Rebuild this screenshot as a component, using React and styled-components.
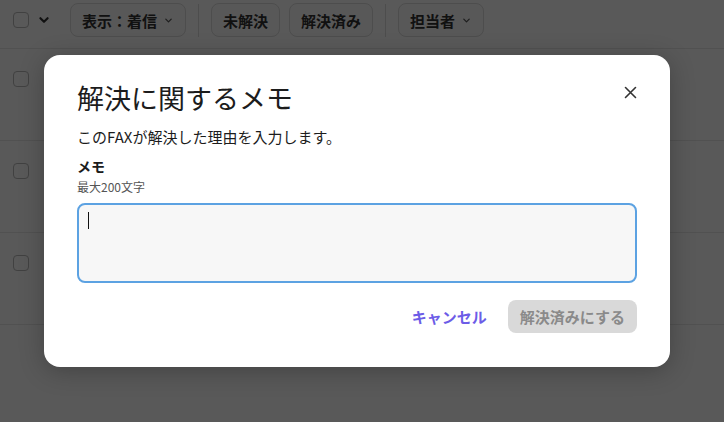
import React from "react";
import styled, { createGlobalStyle } from "styled-components";

const GlobalStyle = createGlobalStyle`
  html, body {
    margin: 0;
    padding: 0;
    background: #ffffff;
    font-family: "Noto Sans CJK JP", "Noto Sans", sans-serif;
  }
  * { box-sizing: border-box; }
`;

const Page = styled.div`
  position: relative;
  width: 724px;
  height: 422px;
  overflow: hidden;
  background: #ffffff;
`;

const Toolbar = styled.div`
  display: flex;
  align-items: center;
  height: 49px;
  padding: 0 0 8px 13px;
  border-bottom: 1px solid #e8e8e8;
`;

const CheckBox = styled.span`
  display: inline-block;
  width: 16px;
  height: 16px;
  border: 1px solid #b9b9b9;
  border-radius: 4px;
  background: #fff;
`;

const Chevron = ({ size = 10, stroke = 2 }) => (
  <svg width={size} height={size} viewBox="0 0 10 10" fill="none">
    <path d="M2 3.5 L5 6.5 L8 3.5" stroke="currentColor" strokeWidth={stroke} strokeLinecap="round" strokeLinejoin="round" />
  </svg>
);

const SelectAll = styled.div`
  display: flex;
  align-items: center;
  gap: 9px;
  color: #333;
  margin-right: 20px;
`;

const FilterButton = styled.button`
  display: inline-flex;
  align-items: center;
  gap: 7px;
  height: 34px;
  padding: 0 ${(p) => (p.$dropdown ? "12px" : "11px")} 0 11px;
  border: 1px solid #dcdcdc;
  border-radius: 8px;
  background: #fbfbfb;
  font-family: inherit;
  font-size: 15px;
  font-weight: 700;
  color: #333;
  margin-right: ${(p) => p.$mr || 9}px;
  svg { color: #555; }
`;

const Divider = styled.span`
  width: 1px;
  height: 33px;
  background: #dcdcdc;
  margin-right: 12px;
`;

const Row = styled.div`
  display: flex;
  align-items: flex-start;
  height: 92px;
  padding: 22px 0 0 13px;
  border-bottom: 1px solid #e8e8e8;
`;

const Overlay = styled.div`
  position: absolute;
  inset: 0;
  background: rgba(0, 0, 0, 0.65);
  display: flex;
  align-items: flex-start;
  justify-content: flex-start;
  padding: 55px 0 0 44px;
`;

const Modal = styled.div`
  position: relative;
  width: 626px;
  height: 312px;
  background: #ffffff;
  border-radius: 16px;
  box-shadow: 0 4px 24px rgba(0, 0, 0, 0.25);
  padding: 24px 33px 33px 33px;
  display: flex;
  flex-direction: column;
`;

const CloseButton = styled.button`
  position: absolute;
  right: 31px;
  top: 28px;
  width: 18px;
  height: 18px;
  padding: 0;
  border: 0;
  background: transparent;
  color: #333;
  display: flex;
  align-items: center;
  justify-content: center;
`;

const Title = styled.h2`
  margin: 0;
  font-size: 27px;
  font-weight: 400;
  line-height: 38px;
  color: #1c1c1c;
`;

const Description = styled.p`
  margin: 9px 0 0;
  font-size: 15px;
  line-height: 22px;
  color: #1c1c1c;
`;

const Label = styled.div`
  margin-top: 8px;
  font-size: 14px;
  font-weight: 700;
  line-height: 20px;
  color: #1c1c1c;
`;

const Hint = styled.div`
  margin-top: 3px;
  font-size: 12px;
  line-height: 16px;
  color: #555;
`;

const Memo = styled.div`
  position: relative;
  margin-top: 8px;
  height: 80px;
  flex-shrink: 0;
  border: 2px solid #5ca2e2;
  border-radius: 8px;
  background: #f7f7f7;
  padding: 7px 9px;
`;

const Caret = styled.span`
  display: block;
  width: 1px;
  height: 17px;
  background: #111;
`;

const Actions = styled.div`
  margin-top: 17px;
  display: flex;
  justify-content: flex-end;
  align-items: center;
  gap: 11px;
`;

const TextButton = styled.button`
  height: 33px;
  padding: 0 10px;
  border: 0;
  background: transparent;
  font-family: inherit;
  font-size: 15px;
  font-weight: 700;
  color: #6c5ce7;
`;

const PrimaryButton = styled.button`
  height: 33px;
  padding: 0 12px;
  border: 0;
  border-radius: 8px;
  background: #d9d9d9;
  font-family: inherit;
  font-size: 15px;
  font-weight: 700;
  color: #8a8a8a;
`;

export default function App() {
  return (
    <>
      <GlobalStyle />
      <Page>
        <Toolbar>
          <SelectAll>
            <CheckBox />
            <Chevron size={12} stroke={1.8} />
          </SelectAll>
          <FilterButton $dropdown $mr={12}>
            表示：着信 <Chevron size={9} stroke={1.4} />
          </FilterButton>
          <Divider />
          <FilterButton>未解決</FilterButton>
          <FilterButton $mr={12}>解決済み</FilterButton>
          <Divider />
          <FilterButton $dropdown>
            担当者 <Chevron size={9} stroke={1.4} />
          </FilterButton>
        </Toolbar>
        {[0, 1, 2].map((i) => (
          <Row key={i}>
            <CheckBox />
          </Row>
        ))}
        <Overlay>
          <Modal role="dialog">
            <CloseButton aria-label="閉じる">
              <svg width="13" height="13" viewBox="0 0 13 13" fill="none">
                <path d="M1.5 1.5 L11.5 11.5 M11.5 1.5 L1.5 11.5" stroke="currentColor" strokeWidth="1.6" strokeLinecap="round" />
              </svg>
            </CloseButton>
            <Title>解決に関するメモ</Title>
            <Description>このFAXが解決した理由を入力します。</Description>
            <Label>メモ</Label>
            <Hint>最大200文字</Hint>
            <Memo>
              <Caret />
            </Memo>
            <Actions>
              <TextButton>キャンセル</TextButton>
              <PrimaryButton>解決済みにする</PrimaryButton>
            </Actions>
          </Modal>
        </Overlay>
      </Page>
    </>
  );
}
